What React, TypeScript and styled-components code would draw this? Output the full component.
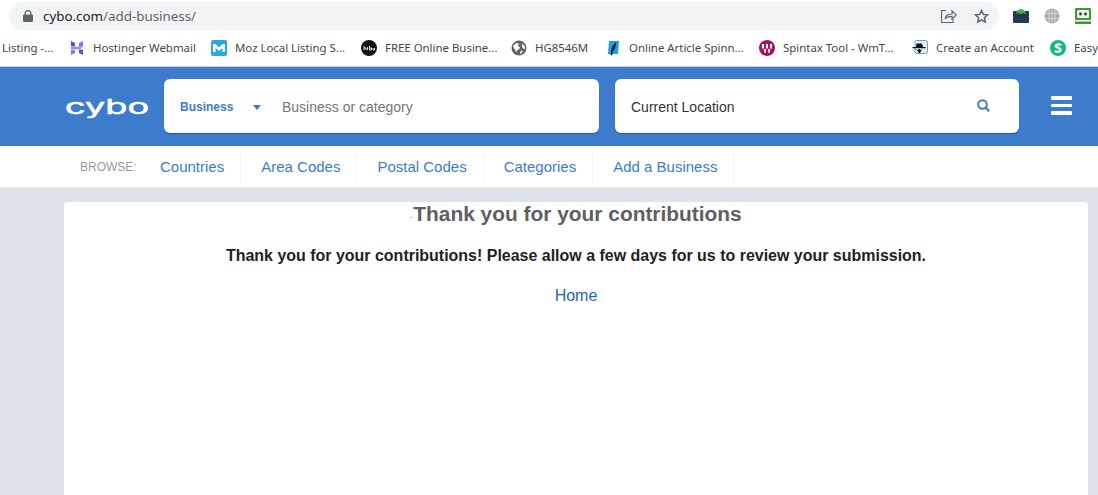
import { ReactNode } from 'react'
import styled, { createGlobalStyle } from 'styled-components'

const GlobalStyle = createGlobalStyle`
	html, body {
		margin: 0;
		padding: 0;
		height: 100%;
		overflow: hidden;
		background: #fff;
		font-family: 'Liberation Sans', Arial, sans-serif;
	}
	* { box-sizing: border-box; }
`

const Page = styled.div`
	display: flex;
	flex-direction: column;
	width: 1098px;
	height: 495px;
	overflow: hidden;
	background: #dee2e9;
`

/* browser chrome */
const Chrome = styled.div`
	flex: none;
	height: 67px;
	background: #fff;
	border-bottom: 1px solid #cfd0d2;
	overflow: hidden;
`

const TopRow = styled.div`
	display: flex;
	align-items: center;
	height: 30px;
	padding: 2px 0 0 9px;
`

const AddressBar = styled.div`
	display: flex;
	align-items: center;
	width: 990px;
	height: 28px;
	padding: 0 10px 0 14px;
	background: #f1f3f4;
	border-radius: 14px;
`

const Url = styled.div`
	margin-left: 10px;
	font-family: 'Noto Sans', sans-serif;
	font-size: 13.35px;
	color: #5f6368;
	flex: 1;
	b {
		font-weight: 400;
		color: #202124;
	}
`

const BarIcon = styled.svg<{ $gap?: number }>`
	display: block;
	flex: none;
	margin-left: ${p => p.$gap ?? 0}px;
`

const Extensions = styled.div`
	display: flex;
	align-items: center;
	margin-left: 14px;
	gap: 15px;
`

const Bookmarks = styled.div`
	display: flex;
	align-items: center;
	height: 36px;
	padding-bottom: 1px;
	white-space: nowrap;
`

const Mark = styled.div<{ $width: number; $inset?: number }>`
	display: flex;
	flex: none;
	align-items: center;
	gap: 8px;
	width: ${p => p.$width}px;
	padding-left: ${p => p.$inset ?? 0}px;
	font-family: 'Noto Sans', sans-serif;
	font-size: 11.42px;
	color: #43474b;
	overflow: hidden;
`

const Favicon = styled.svg`
	display: block;
	flex: none;
`

/* site header */
const Header = styled.header`
	display: flex;
	flex: none;
	align-items: center;
	height: 79px;
	padding-left: 65px;
	background: #3d7ccc;
`

const LogoBox = styled.div`
	flex: none;
	width: 81px;
	height: 32px;
	margin-right: 18px;
`

const Logo = styled.span`
	display: inline-block;
	font-family: Inter, sans-serif;
	font-size: 20.5px;
	font-weight: 400;
	line-height: 32px;
	color: #fff;
	-webkit-text-stroke: 0.5px #fff;
	transform: scaleX(1.76);
	transform-origin: left center;
`

const SearchBox = styled.div<{ $width: number; $gap?: number }>`
	display: flex;
	flex: none;
	align-items: center;
	width: ${p => p.$width}px;
	height: 54px;
	margin-left: ${p => p.$gap ?? 0}px;
	margin-bottom: 1px;
	padding-top: 2px;
	background: #fff;
	border-radius: 6px;
	box-shadow: 0 1px 1px #24578f;
	font-size: 14px;
`

const Scope = styled.span`
	margin-left: 16px;
	width: 73px;
	font-size: 12px;
	font-weight: 700;
	color: #3d7ccc;
`

const Caret = styled.span`
	width: 0;
	height: 0;
	border-left: 4.5px solid transparent;
	border-right: 4.5px solid transparent;
	border-top: 5px solid #3d7ccc;
`

const Placeholder = styled.span`
	margin-left: 21px;
	color: #757575;
`

const LocationText = styled.span`
	flex: 1;
	margin-left: 16px;
	color: #333;
`

const SearchIcon = styled.svg`
	display: block;
	margin: 0 29px 4px 0;
`

const Burger = styled.div`
	display: flex;
	flex-direction: column;
	gap: 4px;
	width: 21px;
	margin: 0 0 2px 32px;
	span {
		display: block;
		height: 3.4px;
		border-radius: 1px;
		background: #fff;
	}
`

/* browse row */
const Browse = styled.nav`
	display: flex;
	flex: none;
	align-items: center;
	height: 42px;
	padding-left: 80px;
	background: #fff;
	border-bottom: 1px solid #e6e8ec;
`

const BrowseLabel = styled.span`
	width: 80px;
	font-size: 12px;
	color: #999;
`

const BrowseLink = styled.a<{ $first?: boolean }>`
	display: flex;
	align-items: center;
	height: 33px;
	padding: 0 16px 0 ${p => (p.$first ? 0 : 20)}px;
	border-right: 1px solid #f2f3f5;
	font-size: 15px;
	color: #3d7ccc;
`

/* content */
const Main = styled.main`
	flex: 1;
	padding: 14px 10px 0 64px;
`

const Card = styled.section`
	height: 100%;
	background: #fff;
	border-radius: 4px 4px 0 0;
	text-align: center;
`

const Title = styled.h1`
	margin: 0;
	font-size: 20.9px;
	line-height: 24px;
	font-weight: 700;
	color: #5f5f5f;
`

const Dot = styled.span`
	display: inline-block;
	width: 2px;
	height: 1px;
	margin-right: 1px;
	background: #b5b5b5;
	vertical-align: 3px;
`

const Message = styled.p`
	margin: 19px 0 0;
	font-size: 15.98px;
	line-height: 22px;
	font-weight: 700;
	color: #222;
`

const HomeLink = styled.a`
	display: block;
	margin-top: 18px;
	font-size: 16px;
	line-height: 22px;
	color: #1a68b0;
`

const icons: Record<string, ReactNode> = {
	hostinger: (
		<Favicon width='16' height='16' viewBox='0 0 16 16'>
			<path fill='#6747c7' d='M2 1l4 2v3.400l-4-.2z' />
			<path fill='#8f6df0' d='M10 3l4-2v5.400l-4 .4zM2 10l4 .2V13l-4 2z' />
			<path fill='#6747c7' d='M10 9.600l4 .2V15l-4-2z' />
			<path fill='#a78bf5' d='M2 6.400h12l-3 3H2z' />
		</Favicon>
	),
	moz: (
		<Favicon width='16' height='16' viewBox='0 0 16 16'>
			<rect width='16' height='16' rx='2' fill='#27a9e1' />
			<path fill='#fff' d='M2 12V4h2.400L8 7.600 11.600 4H14v8h-2.600V7.800L8 11 4.600 7.800V12z' />
		</Favicon>
	),
	nibu: (
		<Favicon width='16' height='16' viewBox='0 0 16 16'>
			<circle cx='8' cy='8' r='8' fill='#111' />
			<path stroke='#ddd' strokeWidth='1' fill='none' d='M3 6v4M3 8h2v2M6.500 7v3M8.500 6v4h2V8h-2M12 8v2h1.500V8' />
		</Favicon>
	),
	globe: (
		<Favicon width='16' height='16' viewBox='0 0 16 16'>
			<circle cx='8' cy='8' r='7.500' fill='#5f6368' />
			<path fill='#fff' d='M2 6l3-3 3 .5-1 2.500 2 1.500-1 2-2 .5-.5 2.500-1.500-2.500zM11 3.500l2.500 2.500.8 3-2.300-.5-1-2.500zM9.500 11l2.500-.5-1.500 3-1.500.5z' />
		</Favicon>
	),
	article: (
		<Favicon width='16' height='16' viewBox='0 0 16 16'>
			<path fill='#1ea1e0' d='M4 1h10l-1 13H3z' />
			<path fill='#10202c' d='M11 2c.5 3-1 7-3 9.500L7 15.500 5.500 15l.5-4C6.500 7 8.500 4 11 2z' />
		</Favicon>
	),
	spintax: (
		<Favicon width='16' height='16' viewBox='0 0 16 16'>
			<circle cx='8' cy='8' r='8' fill='#ab1257' />
			<path fill='#fff' d='M3 4h2v4.500H3zM7 4h2v4.500H7zM11 4h2v4.500h-2zM5 9h2v3.500H5zM9 9h2v3.500H9z' />
		</Favicon>
	),
	account: (
		<Favicon width='16' height='16' viewBox='0 0 16 16'>
			<rect x='3' y='0.500' width='12.500' height='13' rx='2' fill='#e4eff8' stroke='#5a9fd6' />
			<path fill='#111' d='M0.500 7h13v1.200H.5zM4.500 3.500h5.500L11 7H4zM4 9h6.500L7.500 13.500z' />
			<circle cx='5.500' cy='9.500' r='.8' fill='#fff' />
			<circle cx='9' cy='9.500' r='.8' fill='#fff' />
		</Favicon>
	),
	easy: (
		<Favicon width='16' height='16' viewBox='0 0 16 16'>
			<circle cx='8' cy='8' r='8' fill='#14b886' />
			<path fill='none' stroke='#fff' strokeWidth='2.200' d='M11 5.200C10 4 6 3.800 5.600 5.800 5.200 8 10.800 7.600 10.600 10.200 10.300 12.300 6 12.200 4.900 10.800' />
		</Favicon>
	),
}

const bookmarks = [
	{ width: 142, label: 'Hostinger Webmail', icon: 'hostinger' },
	{ width: 150, label: 'Moz Local Listing S...', icon: 'moz' },
	{ width: 150, label: 'FREE Online Busine...', icon: 'nibu' },
	{ width: 94, label: 'HG8546M', icon: 'globe' },
	{ width: 154, label: 'Online Article Spinn...', icon: 'article' },
	{ width: 153, label: 'Spintax Tool - WmT...', icon: 'spintax' },
	{ width: 138, label: 'Create an Account', icon: 'account' },
	{ width: 48, label: 'Easy', icon: 'easy' },
]

const links = ['Countries', 'Area Codes', 'Postal Codes', 'Categories', 'Add a Business']

export default function App() {
	return (
		<Page>
			<GlobalStyle />
			<Chrome>
				<TopRow>
					<AddressBar>
						<BarIcon width='10' height='12' viewBox='0 0 10 12'>
							<path fill='#5f6368' d='M1.500 4.500V3.500a3.500 3.500 0 0 1 7 0v1h.5a1 1 0 0 1 1 1V11a1 1 0 0 1-1 1H1a1 1 0 0 1-1-1V5.500a1 1 0 0 1 1-1zm1.300 0h4.400v-1a2.200 2.200 0 0 0-4.400 0z' />
						</BarIcon>
						<Url>
							<b>cybo.com</b>/add-business/
						</Url>
						<BarIcon width='16' height='14' viewBox='0 0 16 14' fill='none' stroke='#5f6368' strokeWidth='1.100'>
							<path d='M5 1.500H.6v12h11.500v-3.500' />
							<path d='M4 10c.5-3.500 3-5 7-5V1.800l4.300 4.200-4.300 4V7.400c-3 0-5.500.6-7 2.600z' />
						</BarIcon>
						<BarIcon width='15' height='15' viewBox='0 0 15 15' $gap={17} fill='none' stroke='#5f6368' strokeWidth='1.500'>
							<path d='M7.500 1.500l1.800 3.900 4.200.5-3.100 2.900.8 4.200-3.700-2.100-3.700 2.100.8-4.200L1.500 5.900l4.200-.5z' />
						</BarIcon>
					</AddressBar>
					<Extensions>
						<BarIcon width='16' height='14' viewBox='0 0 16 14'>
							<path fill='#2a3654' d='M1 2h14a1 1 0 0 1 1 1v10a1 1 0 0 1-1 1H1a1 1 0 0 1-1-1V3a1 1 0 0 1 1-1z' />
							<path fill='#45b34b' d='M3.500 3.500C4.500 1.500 6 0 8 0s3.500 1.500 4.500 3.500L13 5l-2.500-1L8 5 5.500 4 3 5z' />
						</BarIcon>
						<BarIcon width='16' height='16' viewBox='0 0 16 16' fill='none'>
							<circle cx='8' cy='8' r='7.500' fill='#a9abad' />
							<path stroke='#dcdddf' strokeWidth='0.800' d='M.5 5.500h15M.5 10.500h15M5 .8v14.400M11 .8v14.400M8 .5v15' />
						</BarIcon>
						<BarIcon width='16' height='16' viewBox='0 0 16 16'>
							<rect width='16' height='12' rx='1' fill='#3a9b35' />
							<rect x='2' y='2' width='12' height='8' rx='1' fill='#eef2ec' />
							<circle cx='5.500' cy='6' r='1.400' fill='#333' />
							<circle cx='10.500' cy='6' r='1.400' fill='#333' />
							<rect y='13.500' width='16' height='2.500' fill='#3a9b35' />
						</BarIcon>
					</Extensions>
				</TopRow>
				<Bookmarks>
					<Mark $width={69} $inset={2}>
						Listing -...
					</Mark>
					{bookmarks.map(b => (
						<Mark key={b.label} $width={b.width}>
							{icons[b.icon]}
							<span>{b.label}</span>
						</Mark>
					))}
				</Bookmarks>
			</Chrome>

			<Header>
				<LogoBox>
					<Logo>cybo</Logo>
				</LogoBox>
				<SearchBox $width={435}>
					<Scope>Business</Scope>
					<Caret />
					<Placeholder>Business or category</Placeholder>
				</SearchBox>
				<SearchBox $width={404} $gap={16}>
					<LocationText>Current Location</LocationText>
					<SearchIcon width='13' height='13' viewBox='0 0 13 13' fill='none' stroke='#3d7ccc'>
						<circle cx='5.500' cy='5.500' r='4.300' strokeWidth='2' />
						<path d='M8.700 8.700l3.500 3.500' strokeWidth='2.200' />
					</SearchIcon>
				</SearchBox>
				<Burger>
					<span />
					<span />
					<span />
				</Burger>
			</Header>

			<Browse>
				<BrowseLabel>BROWSE:</BrowseLabel>
				{links.map((l, i) => (
					<BrowseLink key={l} $first={i === 0}>
						{l}
					</BrowseLink>
				))}
			</Browse>

			<Main>
				<Card>
					<Title>
						<Dot />
						Thank you for your contributions
					</Title>
					<Message>
						Thank you for your contributions! Please allow a few days for us to review your submission.
					</Message>
					<HomeLink>Home</HomeLink>
				</Card>
			</Main>
		</Page>
	)
}
